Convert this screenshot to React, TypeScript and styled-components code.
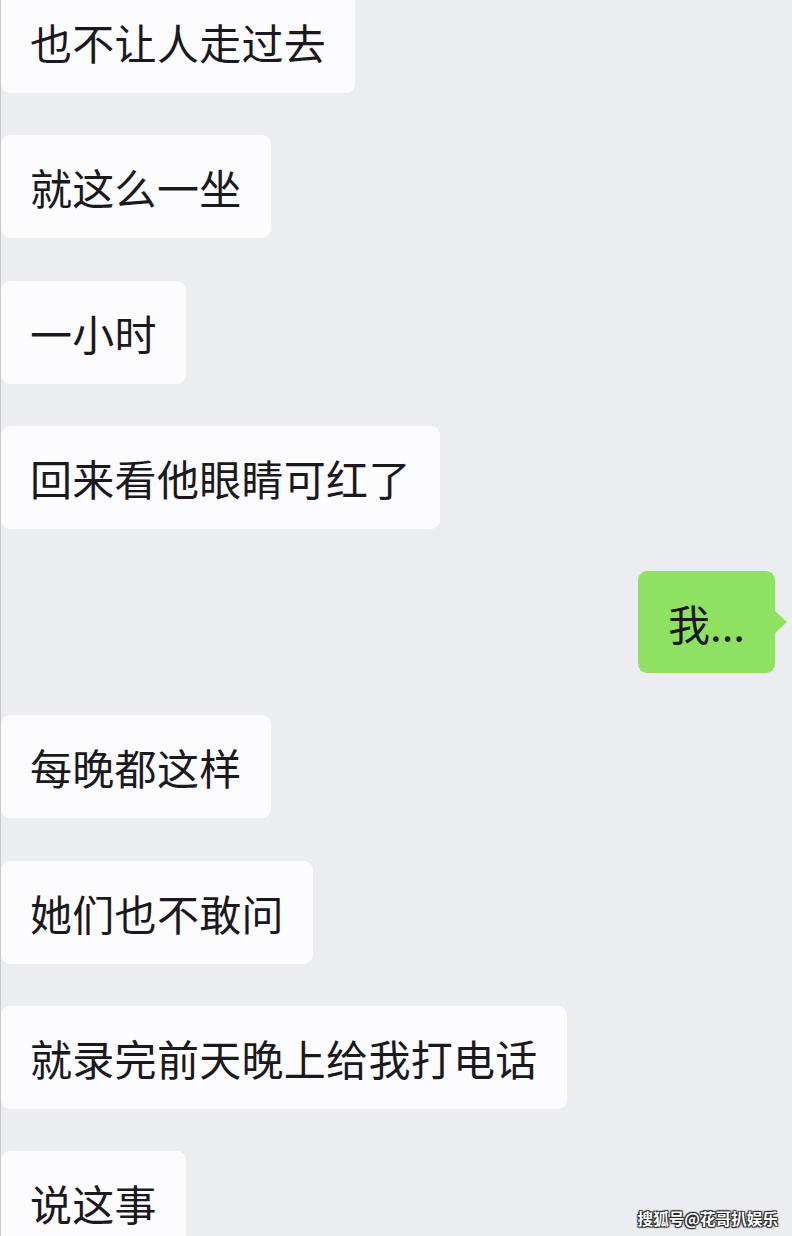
import React from "react";
import styled, { createGlobalStyle } from "styled-components";

const Global = createGlobalStyle`
  html, body { margin: 0; padding: 0; background: #ecedf0; }
  body { overflow: hidden; }
`;

const Screen = styled.div`
  position: relative;
  width: 792px;
  height: 1236px;
  overflow: hidden;
  background: #ecedf0;
  border-left: 1px solid #c9c9cc;
  box-sizing: border-box;
  font-family: "Noto Sans CJK SC", "Noto Sans", sans-serif;
`;

const List = styled.div`
  display: flex;
  flex-direction: column;
  gap: 42.3px;
  margin-top: -10px;
  padding-right: 5px;
`;

const Row = styled.div<{ $mine?: boolean }>`
  display: flex;
  justify-content: ${(p) => (p.$mine ? "flex-end" : "flex-start")};
`;

const Bubble = styled.div<{ $mine?: boolean }>`
  position: relative;
  box-sizing: border-box;
  height: ${(p) => (p.$mine ? 102 : 103)}px;
  display: flex;
  align-items: center;
  padding: ${(p) => (p.$mine ? "0 30px 0 30px" : "0 29px 0 29px")};
  margin-right: ${(p) => (p.$mine ? "12px" : "0")};
  border-radius: 9px;
  background: ${(p) => (p.$mine ? "#8fe261" : "#fcfcfe")};
  color: #1b1820;
  font-size: 42px;
  font-weight: 400;
  letter-spacing: ${(p) => (p.$mine ? "0" : "0.3px")};
  white-space: nowrap;
  ${(p) =>
    p.$mine
      ? `&::after {
    content: "";
    position: absolute;
    right: -12px;
    top: 50%;
    transform: translateY(-50%);
    border-top: 11px solid transparent;
    border-bottom: 11px solid transparent;
    border-left: 12px solid #8fe261;
  }`
      : ""}
`;

const Watermark = styled.div`
  position: absolute;
  right: 14px;
  bottom: 7px;
  font-family: "Noto Sans CJK SC", sans-serif;
  font-size: 15.6px;
  font-weight: 700;
  color: #ffffff;
  text-shadow: 1px 1px 1px #222, -1px -1px 1px #222, 1px -1px 1px #222, -1px 1px 1px #222;
`;

const messages: { text: string; mine?: boolean }[] = [
  { text: "也不让人走过去" },
  { text: "就这么一坐" },
  { text: "一小时" },
  { text: "回来看他眼睛可红了" },
  { text: "我...", mine: true },
  { text: "每晚都这样" },
  { text: "她们也不敢问" },
  { text: "就录完前天晚上给我打电话" },
  { text: "说这事" },
];

export default function App() {
  return (
    <>
      <Global />
      <Screen>
        <List>
          {messages.map((m, i) => (
            <Row key={i} $mine={m.mine}>
              <Bubble $mine={m.mine}>{m.text}</Bubble>
            </Row>
          ))}
        </List>
        <Watermark>搜狐号@花哥扒娱乐</Watermark>
      </Screen>
    </>
  );
}
